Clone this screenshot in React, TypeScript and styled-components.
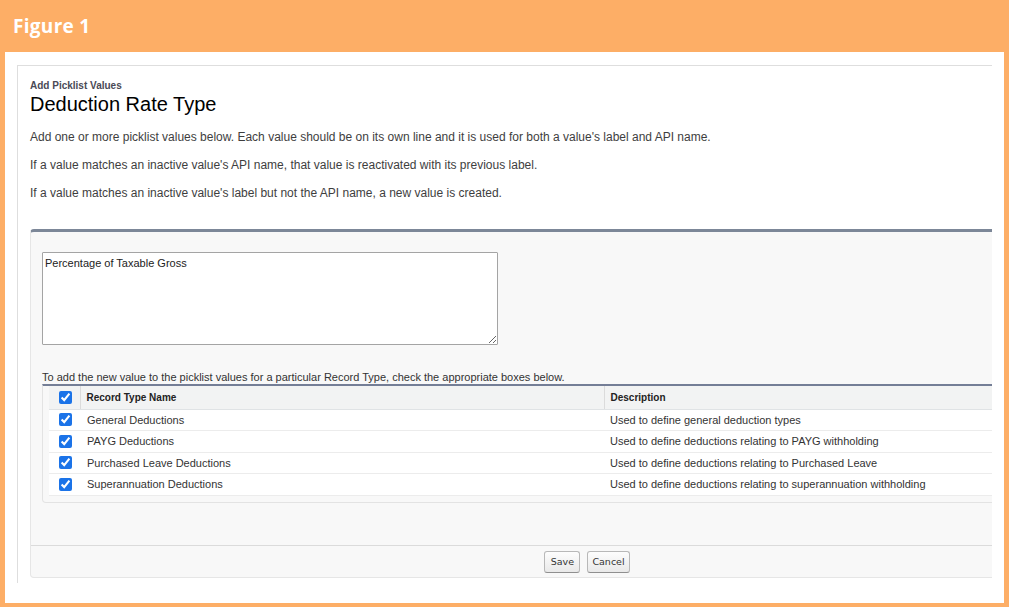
import React from 'react'
import styled, { createGlobalStyle } from 'styled-components'

const GlobalStyle = createGlobalStyle`
  html, body {
    margin: 0;
    padding: 0;
    background: #ffffff;
  }
  body {
    font-family: 'Liberation Sans', Arial, sans-serif;
  }
  * {
    box-sizing: border-box;
  }
`

const Frame = styled.div`
  width: 1009px;
  height: 607px;
  background: #fdae66;
  display: flex;
  flex-direction: column;
  padding: 0 5px 4px 5px;
`

const FigureBar = styled.div`
  height: 52px;
  flex-shrink: 0;
  display: flex;
  align-items: center;
  padding: 0 0 1px 8px;
  color: #ffffff;
  font-family: 'Open Sans', sans-serif;
  font-weight: 700;
  font-size: 19px;
  letter-spacing: 0.3px;
`

const Sheet = styled.div`
  flex: 1;
  display: flex;
  flex-direction: column;
  background: #ffffff;
  padding: 13px 12px 20px 12px;
`

const Panel = styled.div`
  flex: 1;
  border-top: 1px solid #dedede;
  border-left: 1px solid #dedede;
  padding: 14px 0 0 12px;
  overflow: hidden;
`

const PageType = styled.div`
  font-size: 10px;
  line-height: 12px;
  font-weight: 700;
  color: #4a4a56;
`

const PageTitle = styled.h1`
  margin: 0;
  font-size: 20px;
  line-height: 24px;
  font-weight: 400;
  color: #000000;
`

const Intro = styled.div`
  margin-top: 14px;
  display: flex;
  flex-direction: column;
  gap: 14px;
`

const IntroLine = styled.p`
  margin: 0;
  font-size: 12px;
  line-height: 14px;
  color: #3e3e3e;
`

const PageBlock = styled.div`
  margin: 29px -152px 0 0;
  background: #f8f8f8;
  border: 1px solid #e6e6e6;
  border-top: 3px solid #7c8798;
  border-radius: 4px;
  padding: 20px 0 0 0;
`

const BlockBody = styled.div`
  padding-left: 11px;
`

const ValuesInput = styled.textarea`
  display: block;
  width: 456px;
  height: 93px;
  margin: 0;
  padding: 3px 2px;
  font-family: 'Liberation Sans', Arial, sans-serif;
  font-size: 11px;
  line-height: 14px;
  color: #222222;
  background: #ffffff;
  border: 1px solid #a4a4a4;
  border-radius: 1px;
  resize: both;
  outline: none;
`

const Hint = styled.div`
  margin-top: 26px;
  font-size: 11px;
  line-height: 13px;
  color: #333333;
`

const ListBox = styled.div`
  border: 1px solid #e3e3e3;
  border-top: 2px solid #747e96;
  border-radius: 0 0 0 4px;
  padding: 0 0 6px 6px;
`

const List = styled.table`
  width: 100%;
  border-collapse: collapse;
  table-layout: fixed;
  background: #ffffff;
`

const HeadCell = styled.th<{ $width?: number; $divider?: boolean }>`
  ${(p) => (p.$width ? `width: ${p.$width}px;` : '')}
  height: 23px;
  padding: 0 0 0 ${(p) => (p.$divider ? 6 : 10)}px;
  text-align: left;
  vertical-align: middle;
  background: #f2f3f3;
  border-bottom: 1px solid #e0e3e5;
  border-left: ${(p) => (p.$divider ? '1px solid #dbdbdb' : 'none')};
  font-size: 10px;
  font-weight: 700;
  color: #222222;
  white-space: nowrap;
`

const Cell = styled.td<{ $check?: boolean; $desc?: boolean }>`
  height: 21.5px;
  padding: 0 0 0 ${(p) => (p.$check ? 10 : p.$desc ? 6 : 7)}px;
  vertical-align: middle;
  border-bottom: 1px solid #ececec;
  font-size: 11px;
  color: #333333;
  white-space: nowrap;
`

const Check = styled.input.attrs({ type: 'checkbox' })`
  display: block;
  width: 13px;
  height: 13px;
  margin: 0;
  accent-color: #1b73e8;
`

const ButtonBar = styled.div`
  margin-top: 42px;
  border-top: 1px solid #dbdbdb;
  padding: 5px 0 4px;
  display: flex;
  justify-content: center;
  gap: 7px;
`

const Button = styled.button`
  height: 22px;
  min-width: 36px;
  padding: 0 4px;
  font-family: 'DejaVu Sans', Verdana, sans-serif;
  font-size: 9.5px;
  font-weight: 400;
  color: #333333;
  background: linear-gradient(#fdfdfd, #e9e9e9);
  border: 1px solid #b8b8b8;
  border-bottom-color: #8f8f8f;
  border-radius: 3px;
`

const recordTypes = [
  { name: 'General Deductions', desc: 'Used to define general deduction types' },
  { name: 'PAYG Deductions', desc: 'Used to define deductions relating to PAYG withholding' },
  { name: 'Purchased Leave Deductions', desc: 'Used to define deductions relating to Purchased Leave' },
  { name: 'Superannuation Deductions', desc: 'Used to define deductions relating to superannuation withholding' },
]

export default function App() {
  return (
    <>
      <GlobalStyle />
      <Frame>
        <FigureBar>Figure 1</FigureBar>
        <Sheet>
          <Panel>
            <PageType>Add Picklist Values</PageType>
            <PageTitle>Deduction Rate Type</PageTitle>
            <Intro>
              <IntroLine>
                Add one or more picklist values below. Each value should be on its own line and it is used for both a
                value's label and API name.
              </IntroLine>
              <IntroLine>If a value matches an inactive value's API name, that value is reactivated with its previous label.</IntroLine>
              <IntroLine>If a value matches an inactive value's label but not the API name, a new value is created.</IntroLine>
            </Intro>

            <PageBlock>
              <BlockBody>
                <ValuesInput defaultValue="Percentage of Taxable Gross" />
                <Hint>
                  To add the new value to the picklist values for a particular Record Type, check the appropriate boxes
                  below.
                </Hint>
                <ListBox>
                  <List>
                    <thead>
                      <tr>
                        <HeadCell $width={31}>
                          <Check defaultChecked />
                        </HeadCell>
                        <HeadCell $width={524} $divider>
                          Record Type Name
                        </HeadCell>
                        <HeadCell $divider>Description</HeadCell>
                      </tr>
                    </thead>
                    <tbody>
                      {recordTypes.map((rt) => (
                        <tr key={rt.name}>
                          <Cell $check>
                            <Check defaultChecked />
                          </Cell>
                          <Cell>{rt.name}</Cell>
                          <Cell $desc>{rt.desc}</Cell>
                        </tr>
                      ))}
                    </tbody>
                  </List>
                </ListBox>
              </BlockBody>
              <ButtonBar>
                <Button>Save</Button>
                <Button>Cancel</Button>
              </ButtonBar>
            </PageBlock>
          </Panel>
        </Sheet>
      </Frame>
    </>
  )
}
